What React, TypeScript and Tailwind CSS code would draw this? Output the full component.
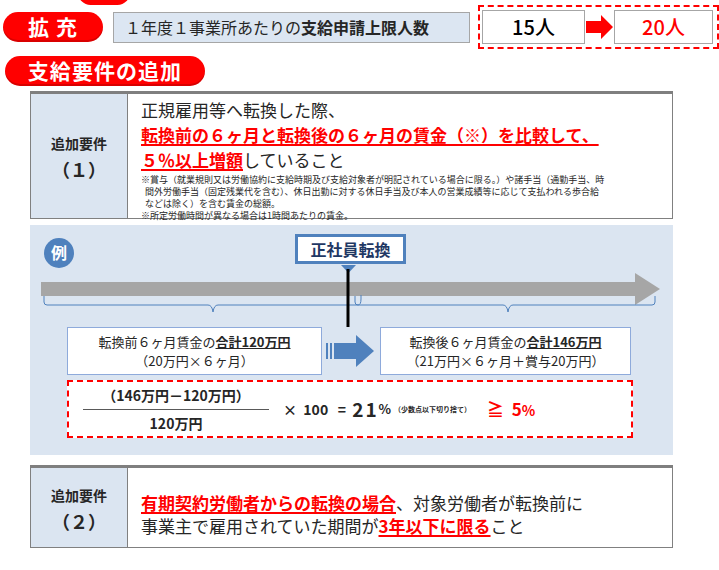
import React from 'react';

const jp = { fontFamily: '"Noto Sans CJK JP", "Noto Sans", sans-serif' };

function Pill({ children, w }: { children: React.ReactNode; w: string }) {
  return (
    <div className={`${w} h-[30px] rounded-full bg-[#ff0000] text-white font-bold text-[21px] flex items-center justify-center tracking-wider shadow-[inset_0_-2px_0_rgba(0,0,0,0.15)]`}>
      {children}
    </div>
  );
}

export default function App() {
  return (
    <div style={jp} className="w-[719px] h-[570px] bg-white text-[#262626] relative overflow-hidden">
      {/* cut-off pill at top */}
      <div className="absolute left-[78px] top-[-20px] w-[52px] h-[25px] rounded-full bg-[#ff0000]" />

      {/* 拡充 row */}
      <div className="flex items-center pt-[5px]">
        <div className="ml-[3px]"><Pill w="w-[100px]">拡&nbsp;充</Pill></div>
        <div className="ml-[10px] w-[357px] h-[31px] bg-[#dce6f2] border border-[#a6a6a6] flex items-center pl-[11px] text-[16px]">
          １年度１事業所あたりの<b>支給申請上限人数</b>
        </div>
        <div className="ml-[8px] w-[241px] h-[44px] border-2 border-dashed border-[#ff0000] flex items-center px-[2px]">
          <div className="w-[103px] h-[34px] border border-[#a6a6a6] flex items-center justify-center text-[20px] font-medium text-black">15人</div>
          <svg width="29" height="24" viewBox="0 0 29 24">
            <polygon points="1,6 16,6 16,0 28,12 16,24 16,18 1,18" fill="#ff0000" />
          </svg>
          <div className="w-[99px] h-[34px] border border-[#a6a6a6] flex items-center justify-center text-[20px] font-medium text-[#ff0000]">20人</div>
        </div>
      </div>

      <div className="ml-[5px] mt-[7px]"><Pill w="w-[200px]">支給要件の追加</Pill></div>

      {/* 要件1 */}
      <div className="ml-[30px] mt-[5px] w-[643px] h-[128px] flex border border-[#808080] border-t-[3px] border-t-[#7f7f7f]">
        <div className="w-[97px] bg-[#dbe5f1] border-r border-[#808080] flex flex-col items-center justify-center font-bold text-[14px] leading-[26px]">
          <div>追加要件</div>
          <div className="text-[18px]">（１）</div>
        </div>
        <div className="flex-1 pl-[13px] pt-[3px]">
          <div className="text-[17px] leading-[25px]">正規雇用等へ転換した際、</div>
          <div className="text-[17px] leading-[25px] font-bold text-[#ff0000] underline decoration-2 underline-offset-2">転換前の６ヶ月と転換後の６ヶ月の賃金（※）を比較して、</div>
          <div className="text-[17px] leading-[25px]"><span className="font-bold text-[#ff0000] underline decoration-2 underline-offset-2">５％以上増額</span>していること</div>
          <div className="text-[9px] leading-[12px] mt-[2px] pr-[8px]">
            ※賞与（就業規則又は労働協約に支給時期及び支給対象者が明記されている場合に限る。）や諸手当（通勤手当、時
            <br />&nbsp;&nbsp;間外労働手当（固定残業代を含む）、休日出勤に対する休日手当及び本人の営業成績等に応じて支払われる歩合給
            <br />&nbsp;&nbsp;などは除く）を含む賃金の総額。
            <br />※所定労働時間が異なる場合は1時間あたりの賃金。
          </div>
        </div>
      </div>

      {/* 例 panel */}
      <div className="ml-[30px] mt-[6px] w-[643px] h-[230px] bg-[#dbe5f1] relative">
        <svg width="643" height="102" viewBox="0 0 643 102" className="block">
          <circle cx="29" cy="28" r="15" fill="#4f81bd" />
          <text x="29" y="34" textAnchor="middle" fill="white" fontWeight="bold" fontSize="16" style={jp}>例</text>
          <rect x="11" y="57" width="595" height="14" fill="#a6a6a6" />
          <polygon points="605,48 630,64 605,80" fill="#a6a6a6" />
          <path d="M14,71 v6 q0,3 3,3 h161 q4,0 5,7 q1,-7 5,-7 h140 q3,0 3,-6 v-4" fill="none" stroke="#4f81bd" strokeWidth="1" />
          <path d="M325,71 v6 q0,3 3,3 h145 q4,0 5,7 q1,-7 5,-7 h139 q3,0 3,-3 v-6" fill="none" stroke="#4f81bd" strokeWidth="1" />
          <polygon points="311,40 326,40 318.5,48" fill="#4f81bd" />
          <line x1="318" y1="44" x2="318" y2="102" stroke="#000" strokeWidth="3" />
        </svg>
        <div className="absolute left-[265px] top-[9px] w-[111px] h-[30px] bg-white border-[3px] border-[#4f81bd] flex items-center justify-center font-bold text-[16px] text-[#1f3864]">正社員転換</div>

        <div className="flex items-center ml-[37px]">
          <div className="w-[255px] h-[48px] bg-white border border-[#8eaadb] flex flex-col items-center justify-center text-[13px] leading-[19px]">
            <div>転換前６ヶ月賃金の<b className="underline">合計120万円</b></div>
            <div>（20万円×６ヶ月）</div>
          </div>
          <svg width="58" height="40" viewBox="0 0 58 40">
            <rect x="4" y="12" width="2" height="16" fill="#4f81bd" />
            <rect x="8" y="12" width="2" height="16" fill="#4f81bd" />
            <polygon points="12,12 34,12 34,4 52,20 34,36 34,28 12,28" fill="#4f81bd" />
          </svg>
          <div className="w-[251px] h-[48px] bg-white border border-[#8eaadb] flex flex-col items-center justify-center text-[13px] leading-[19px]">
            <div>転換後６ヶ月賃金の<b className="underline">合計146万円</b></div>
            <div>（21万円×６ヶ月＋賞与20万円）</div>
          </div>
        </div>

        <div className="ml-[37px] mt-[5px] w-[566px] h-[58px] bg-white border-2 border-dashed border-[#ff0000] flex items-center font-bold text-[14px]">
          <div className="ml-[14px] flex flex-col items-center w-[186px]">
            <div className="pb-[3px]">（146万円－120万円）</div>
            <div className="w-full border-t border-[#595959]" />
            <div className="pt-[3px]">120万円</div>
          </div>
          <span className="ml-[14px]">×&nbsp;&nbsp;100&nbsp;&nbsp;&nbsp;=&nbsp;&nbsp;</span>
          <span className="text-[19px] tracking-widest">21</span><span className="text-[13px]">%</span>
          <span className="text-[7px] ml-[3px]">（少数点以下切り捨て）</span>
          <span className="ml-[16px] text-[#ff0000] text-[17px]">≧&nbsp;&nbsp;5<span className="text-[14px]">%</span></span>
        </div>
      </div>

      {/* 要件2 */}
      <div className="ml-[30px] mt-[10px] w-[643px] h-[83px] flex border border-[#808080] border-t-[3px] border-t-[#7f7f7f]">
        <div className="w-[97px] bg-[#dbe5f1] border-r border-[#808080] flex flex-col items-center justify-center font-bold text-[14px] leading-[26px]">
          <div>追加要件</div>
          <div className="text-[18px]">（２）</div>
        </div>
        <div className="flex-1 pl-[13px] pt-[23px] text-[17px] leading-[23px]">
          <div><span className="font-bold text-[#ff0000] underline decoration-2 underline-offset-2">有期契約労働者からの転換の場合</span>、対象労働者が転換前に</div>
          <div>事業主で雇用されていた期間が<span className="font-bold text-[#ff0000] underline decoration-2 underline-offset-2">3年以下に限る</span>こと</div>
        </div>
      </div>
    </div>
  );
}
